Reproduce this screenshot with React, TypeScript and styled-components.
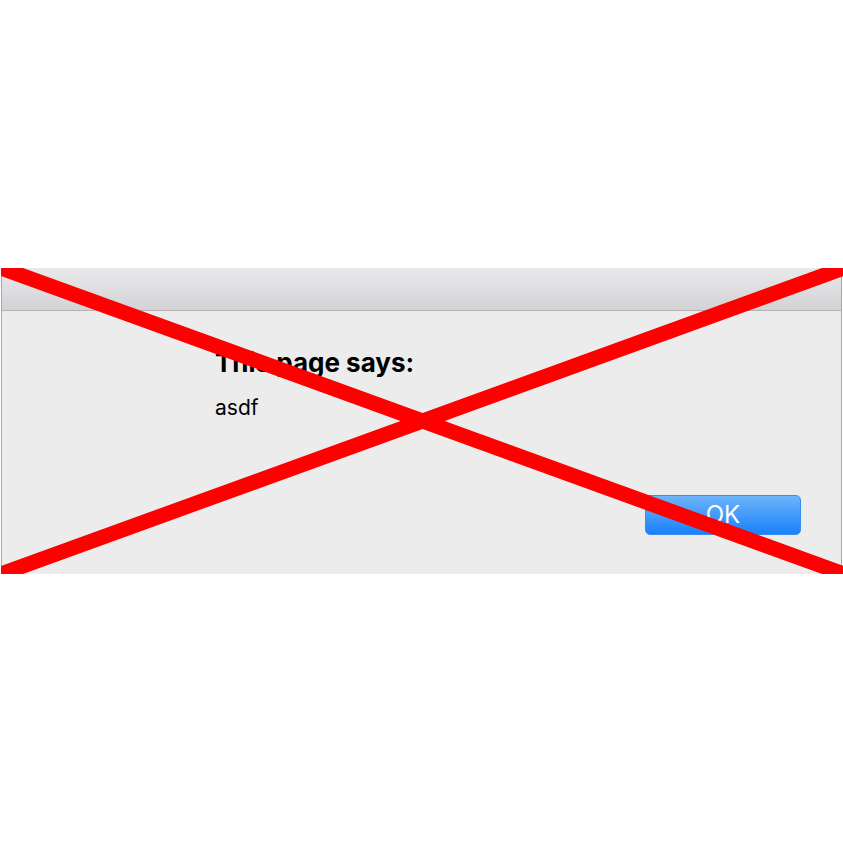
import React from "react";
import styled, { createGlobalStyle } from "styled-components";

const Global = createGlobalStyle`
  html, body { margin: 0; padding: 0; background: #ffffff; }
  body { font-family: Inter, "Liberation Sans", Arial, sans-serif; }
`;

const Page = styled.div`
  width: 843px;
  height: 843px;
  padding-top: 268px;
  box-sizing: border-box;
  overflow: hidden;
`;

const Dialog = styled.div`
  position: relative;
  box-sizing: border-box;
  width: 841px;
  height: 306px;
  margin-left: 1px;
  border-left: 1px solid #a7a7a7;
  border-right: 1px solid #a7a7a7;
  background: #ececec;
  display: flex;
  flex-direction: column;
`;

const TitleBar = styled.div`
  height: 42px;
  flex: none;
  background: linear-gradient(to bottom, #e9e8ea, #d3d2d4);
  border-bottom: 1px solid #b3b3b3;
`;

const Body = styled.div`
  flex: 1;
  display: flex;
  flex-direction: column;
  padding: 36px 40px 39px 213px;
`;

const Heading = styled.div`
  font-size: 26px;
  line-height: 31px;
  font-weight: 700;
  color: #000;
`;

const Message = styled.div`
  margin-top: 17px;
  font-size: 21px;
  line-height: 25px;
  color: #000;
`;

const Actions = styled.div`
  margin-top: auto;
  display: flex;
  justify-content: flex-end;
`;

const OkButton = styled.button`
  box-sizing: border-box;
  width: 156px;
  height: 40px;
  border-radius: 5px;
  border: 1px solid #3b8cf0;
  background: linear-gradient(to bottom, #6db4fa, #1a81fb);
  color: #ffffff;
  font-family: Inter, "Liberation Sans", Arial, sans-serif;
  font-size: 24px;
  line-height: 1;
  padding: 0;
`;

const Cross = styled.svg`
  position: absolute;
  left: -1px;
  top: 0;
  width: 843px;
  height: 306px;
  pointer-events: none;
`;

export default function App() {
  return (
    <Page>
      <Global />
      <Dialog>
        <TitleBar />
        <Body>
          <Heading>This page says:</Heading>
          <Message>asdf</Message>
          <Actions>
            <OkButton>OK</OkButton>
          </Actions>
        </Body>
        <Cross viewBox="0 0 843 306">
          <line x1="0" y1="0" x2="843" y2="306" stroke="#ff0000" strokeWidth="15" />
          <line x1="0" y1="306" x2="843" y2="0" stroke="#ff0000" strokeWidth="15" />
        </Cross>
      </Dialog>
    </Page>
  );
}
